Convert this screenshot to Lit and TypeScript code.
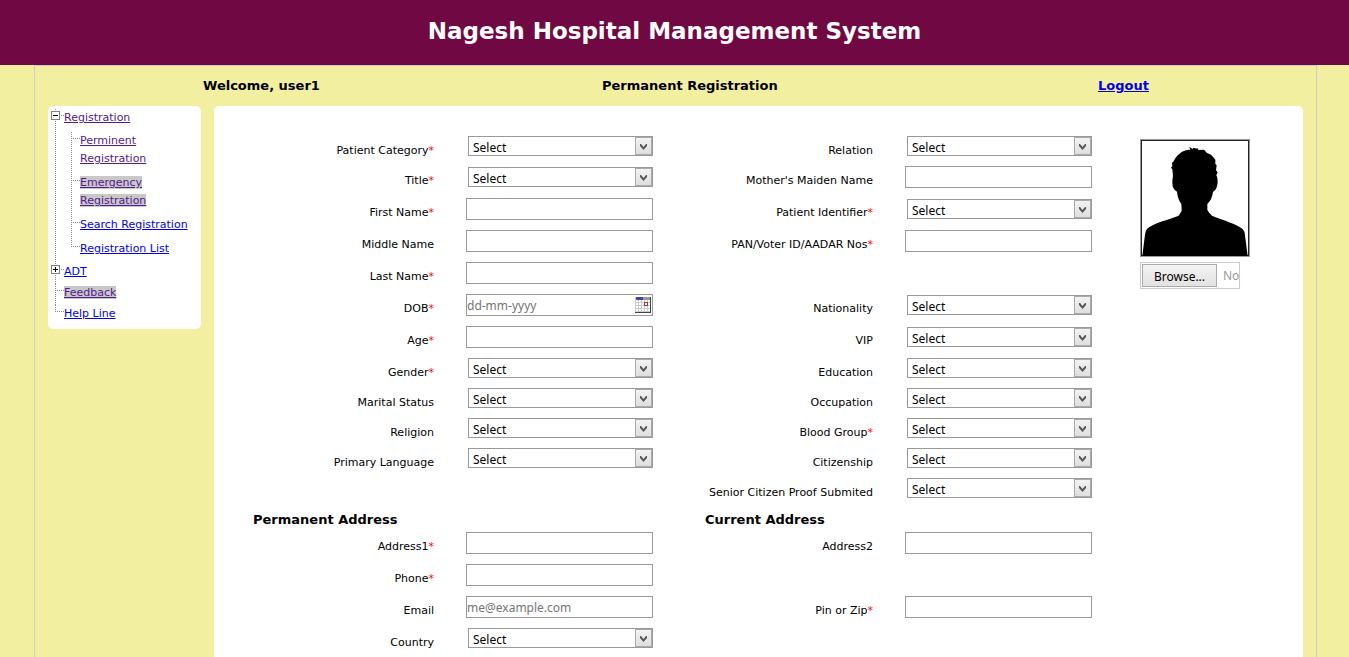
import { LitElement, html, css, svg, nothing } from "lit";
import { customElement, property, query, state } from "lit/decorators.js";

type Field = {
  label: string;
  kind: "select" | "text" | "date";
  required?: boolean;
  placeholder?: string;
};
type Row = [Field | null, Field | null];

const sel = (label: string, required = false): Field => ({ label, kind: "select", required });
const txt = (label: string, required = false, placeholder = ""): Field => ({
  label,
  kind: "text",
  required,
  placeholder,
});

const patientRows: Row[] = [
  [sel("Patient Category", true), sel("Relation")],
  [sel("Title", true), txt("Mother's Maiden Name")],
  [txt("First Name", true), sel("Patient Identifier", true)],
  [txt("Middle Name"), txt("PAN/Voter ID/AADAR Nos", true)],
  [txt("Last Name", true), null],
  [{ label: "DOB", kind: "date", required: true, placeholder: "dd-mm-yyyy" }, sel("Nationality")],
  [txt("Age", true), sel("VIP")],
  [sel("Gender", true), sel("Education")],
  [sel("Marital Status"), sel("Occupation")],
  [sel("Religion"), sel("Blood Group", true)],
  [sel("Primary Language"), sel("Citizenship")],
  [null, sel("Senior Citizen Proof Submited")],
];

const addressRows: Row[] = [
  [txt("Address1", true), txt("Address2")],
  [txt("Phone", true), null],
  [txt("Email", false, "me@example.com"), txt("Pin or Zip", true)],
  [sel("Country"), null],
];

@customElement("nav-tree")
class NavTree extends LitElement {
  @state() private open = true;

  static styles = css`
    :host {
      display: block;
      box-sizing: border-box;
      padding: 3px 6px 6px 3px;
      border-radius: 5px;
      background: #fff;
      font-size: 11px;
      line-height: 18px;
    }
    ul {
      list-style: none;
      margin: 0;
      padding: 0;
    }
    li {
      padding: 0 0 3px 13px;
      background:
        repeating-linear-gradient(#888 0 1px, #fff 1px 2px) 4px 0 / 1px 100% no-repeat,
        repeating-linear-gradient(90deg, #888 0 1px, #fff 1px 2px) 4px 6px / 9px 1px no-repeat;
    }
    li.last {
      padding-bottom: 0;
      background-size: 1px 7px, 9px 1px;
    }
    .sub {
      margin: 3px 0 2px 3px;
      padding-top: 2px;
    }
    .sub li {
      padding-bottom: 6px;
    }
    .sub li.last {
      padding-bottom: 0;
    }
    .branch {
      display: flex;
      align-items: flex-start;
      margin-left: -13px;
      gap: 4px;
    }
    .toggle {
      width: 9px;
      height: 9px;
      margin: 2px 0 0;
      padding: 0;
      border: 0;
      background: #fff;
      display: block;
      line-height: 0;
    }
    a {
      color: #0000ee;
    }
    .visited {
      color: #551a8b;
    }
    .marked {
      background: #c8c8c8;
    }
  `;

  private box(expanded: boolean, label: string) {
    return html`<button
      class="toggle"
      type="button"
      aria-label=${label}
      aria-expanded=${expanded}
      @click=${() => label === "Registration menu" && (this.open = !this.open)}
    >
      <svg width="9" height="9" viewBox="0 0 9 9" shape-rendering="crispEdges">
        <rect x="0.5" y="0.5" width="8" height="8" fill="#fff" stroke="#808080" />
        <path d=${expanded ? "M2 4.5h5" : "M2 4.5h5M4.5 2v5"} stroke="#000" fill="none" />
      </svg>
    </button>`;
  }

  render() {
    return html`<nav>
      <ul>
        <li>
          <div class="branch">
            ${this.box(this.open, "Registration menu")}<a class="visited" href="#registration">Registration</a>
          </div>
          ${this.open
            ? html`<ul class="sub">
                <li><a class="visited" href="#permanent">Perminent Registration</a></li>
                <li><a class="visited marked" href="#emergency">Emergency Registration</a></li>
                <li><a href="#search">Search Registration</a></li>
                <li class="last"><a href="#list">Registration List</a></li>
              </ul>`
            : nothing}
        </li>
        <li>
          <div class="branch">${this.box(false, "ADT menu")}<a href="#adt">ADT</a></div>
        </li>
        <li><a class="visited marked" href="#feedback">Feedback</a></li>
        <li class="last"><a href="#help">Help Line</a></li>
      </ul>
    </nav>`;
  }
}

@customElement("form-row")
class FormRow extends LitElement {
  @property({ attribute: false }) row: Row = [null, null];

  static styles = css`
    :host {
      display: grid;
      grid-template-columns: 1fr 187px 1fr 187px;
      align-items: center;
      min-height: 30px;
    }
    label,
    .blank {
      align-self: start;
      height: 30px;
      line-height: 30px;
      padding-right: 32px;
      text-align: right;
      font-size: 11px;
      white-space: nowrap;
    }
    .star {
      color: #f00;
    }
    input,
    select {
      box-sizing: border-box;
      width: 100%;
      margin: 0;
      border: 1px solid #999;
      border-radius: 0;
      background: #fff;
      color: #000;
      font: 12px "Noto Sans", sans-serif;
    }
    input {
      height: 22px;
      padding: 0;
    }
    input::placeholder {
      color: #757575;
      opacity: 1;
    }
    .control {
      margin-bottom: 10px;
      display: grid;
    }
    .choice {
      margin-left: 2px;
    }
    .choice > *,
    .date > * {
      grid-area: 1 / 1;
    }
    select {
      appearance: none;
      height: 20px;
      padding: 2px 20px 0 4px;
    }
    .arrow {
      justify-self: end;
      pointer-events: none;
    }
    .calendar {
      justify-self: end;
      align-self: center;
      margin: 0 2px 0 0;
      padding: 0;
      border: 0;
      background: none;
      line-height: 0;
    }
  `;

  private control(f: Field, id: string) {
    if (f.kind === "select") {
      return html`<div class="control choice">
        <select id=${id}>
          <option>Select</option>
        </select>
        <svg class="arrow" width="18" height="20" viewBox="0 0 18 20">
          <defs>
            <linearGradient id="g" x2="0" y2="1">
              <stop offset="0" stop-color="#f3f3f3" />
              <stop offset="1" stop-color="#dedede" />
            </linearGradient>
          </defs>
          <rect x="0.5" y="1.5" width="16" height="17" fill="url(#g)" stroke="#aaa" />
          <path d="M5 8v2l3.5 4 3.5-4v-2h-1l-2.5 3-2.5-3z" fill="#555" />
        </svg>
      </div>`;
    }
    if (f.kind === "date") {
      return html`<div class="control date">
        <input id=${id} type="text" placeholder=${f.placeholder ?? ""} />
        <button class="calendar" type="button" aria-label="Open calendar">
          <svg width="16" height="16" viewBox="0 0 16 16" shape-rendering="crispEdges">
            <rect width="16" height="16" fill="#ccc" />
            <g fill="#fff">
              ${[3, 6, 9, 12].map((y) =>
                [1, 4, 7, 10, 13].map((x) => svg`<rect x=${x} y=${y} width="2" height="2" />`)
              )}
            </g>
            <rect x="1" width="7" height="3" fill="#44a" />
            <rect x="8" width="8" height="3" fill="#999" />
            <rect x="9.5" y="5.5" width="3" height="3" fill="#fff" stroke="#a33" />
            <path d="M15.5 0v15.5H0" fill="none" stroke="#444" />
          </svg>
        </button>
      </div>`;
    }
    return html`<div class="control">
      <input id=${id} type="text" placeholder=${f.placeholder ?? ""} />
    </div>`;
  }

  private cell(f: Field | null, id: string) {
    if (!f) return html`<span class="blank"></span><span></span>`;
    return html`<label for=${id}>${f.label}${f.required ? html`<span class="star">*</span>` : nothing}</label>
      ${this.control(f, id)}`;
  }

  render() {
    return html`${this.cell(this.row[0], "first")}${this.cell(this.row[1], "second")}`;
  }
}

@customElement("photo-picker")
class PhotoPicker extends LitElement {
  @query("input") private file!: HTMLInputElement;

  static styles = css`
    :host {
      display: block;
      padding: 3px 0 0 48px;
    }
    .photo {
      display: block;
    }
    .picker {
      display: flex;
      align-items: center;
      gap: 6px;
      box-sizing: border-box;
      width: 100px;
      height: 27px;
      margin-top: 5px;
      padding: 1px;
      border: 1px solid #ccc;
      overflow: hidden;
      font: 12px/22px "Noto Sans", sans-serif;
      color: #999;
    }
    .picker span {
      padding-top: 1px;
    }
    button {
      flex: none;
      box-sizing: border-box;
      width: 75px;
      height: 23px;
      padding: 1px 0 0;
      border: 1px solid #aaa;
      background: linear-gradient(#f3f3f3, #e2e2e2);
      font: inherit;
      color: #000;
    }
  `;

  render() {
    return html`
      <svg class="photo" width="110" height="118" viewBox="180 27 330 354" role="img" aria-label="Patient photo">
        <rect x="181.5" y="28.5" width="327" height="351" fill="#fff" stroke="#999" stroke-width="3" />
        <rect x="184.5" y="31.5" width="321" height="345" fill="#fff" stroke="#222" stroke-width="3" />
        <path
          d="M187 378L194 322Q196 301 203 295C222 278 265 270 296 257Q301 250 305 242L304 222Q293 207 291 185Q283 182 278 169Q275 155 279 137L277 118 273 113 277 108 276 98 281 94Q285 84 293 76L306 65 318 61 326 59 331 59 329 54 324 52 333 53 337 57 341 53 350 56 351 53 356 60 372 59 381 69 393 74 402 84 406 90 406 102 410 106 408 121 413 127 409 136Q415 147 412 164Q409 181 399 185Q397 207 382 222L382 240Q388 251 396 257C428 271 470 281 488 297Q494 303 495 316L503 378Z"
        />
      </svg>
      <div class="picker">
        <button type="button" @click=${() => this.file.click()}>Browse...</button>
        <span>No</span>
        <input type="file" aria-label="Patient photo file" hidden />
      </div>
    `;
  }
}

@customElement("app-root")
class AppRoot extends LitElement {
  static styles = css`
    :host {
      display: flex;
      flex-direction: column;
      min-height: 100vh;
      background: #f3efa1;
      color: #000;
      font-family: Verdana, "DejaVu Sans", sans-serif;
    }
    header {
      padding: 14px 0 17px;
      background: #700943;
      color: #fff;
      text-align: center;
    }
    h1 {
      margin: 0;
      font-size: 23px;
      line-height: 34px;
    }
    .page {
      flex: 1;
      display: flex;
      flex-direction: column;
      margin: 0 32px 0 34px;
      border: 1px solid #ccc;
      border-bottom: 0;
    }
    .bar {
      display: grid;
      grid-template-columns: 399fr 496fr 218fr;
      padding-left: 168px;
      font-size: 13px;
      font-weight: bold;
      line-height: 40px;
    }
    .bar h2 {
      margin: 0;
      font-size: 13px;
    }
    .bar a {
      color: #0000ee;
    }
    .body {
      flex: 1;
      display: flex;
      gap: 13px;
      padding: 0 13px;
    }
    nav-tree {
      flex: none;
      align-self: flex-start;
      width: 153px;
    }
    .card {
      flex: 1;
      display: flex;
      padding-top: 30px;
      border-radius: 5px 5px 0 0;
      background: #fff;
    }
    form {
      flex: 1;
    }
    photo-picker {
      flex: none;
      width: 163px;
    }
    .heads {
      display: grid;
      grid-template-columns: 1fr 1fr;
    }
    .heads h3 {
      margin: 0;
      padding-left: 39px;
      font-size: 13px;
      line-height: 24px;
    }
    .heads h3 + h3 {
      padding-left: 52px;
    }
  `;

  render() {
    return html`
      <header><h1>Nagesh Hospital Management System</h1></header>
      <div class="page">
        <div class="bar">
          <span>Welcome, user1</span>
          <h2>Permanent Registration</h2>
          <span><a href="#logout">Logout</a></span>
        </div>
        <div class="body">
          <nav-tree></nav-tree>
          <main class="card">
            <form>
              ${patientRows.map((row) => html`<form-row .row=${row}></form-row>`)}
              <div class="heads">
                <h3>Permanent Address</h3>
                <h3>Current Address</h3>
              </div>
              ${addressRows.map((row) => html`<form-row .row=${row}></form-row>`)}
            </form>
            <photo-picker></photo-picker>
          </main>
        </div>
      </div>
    `;
  }
}
